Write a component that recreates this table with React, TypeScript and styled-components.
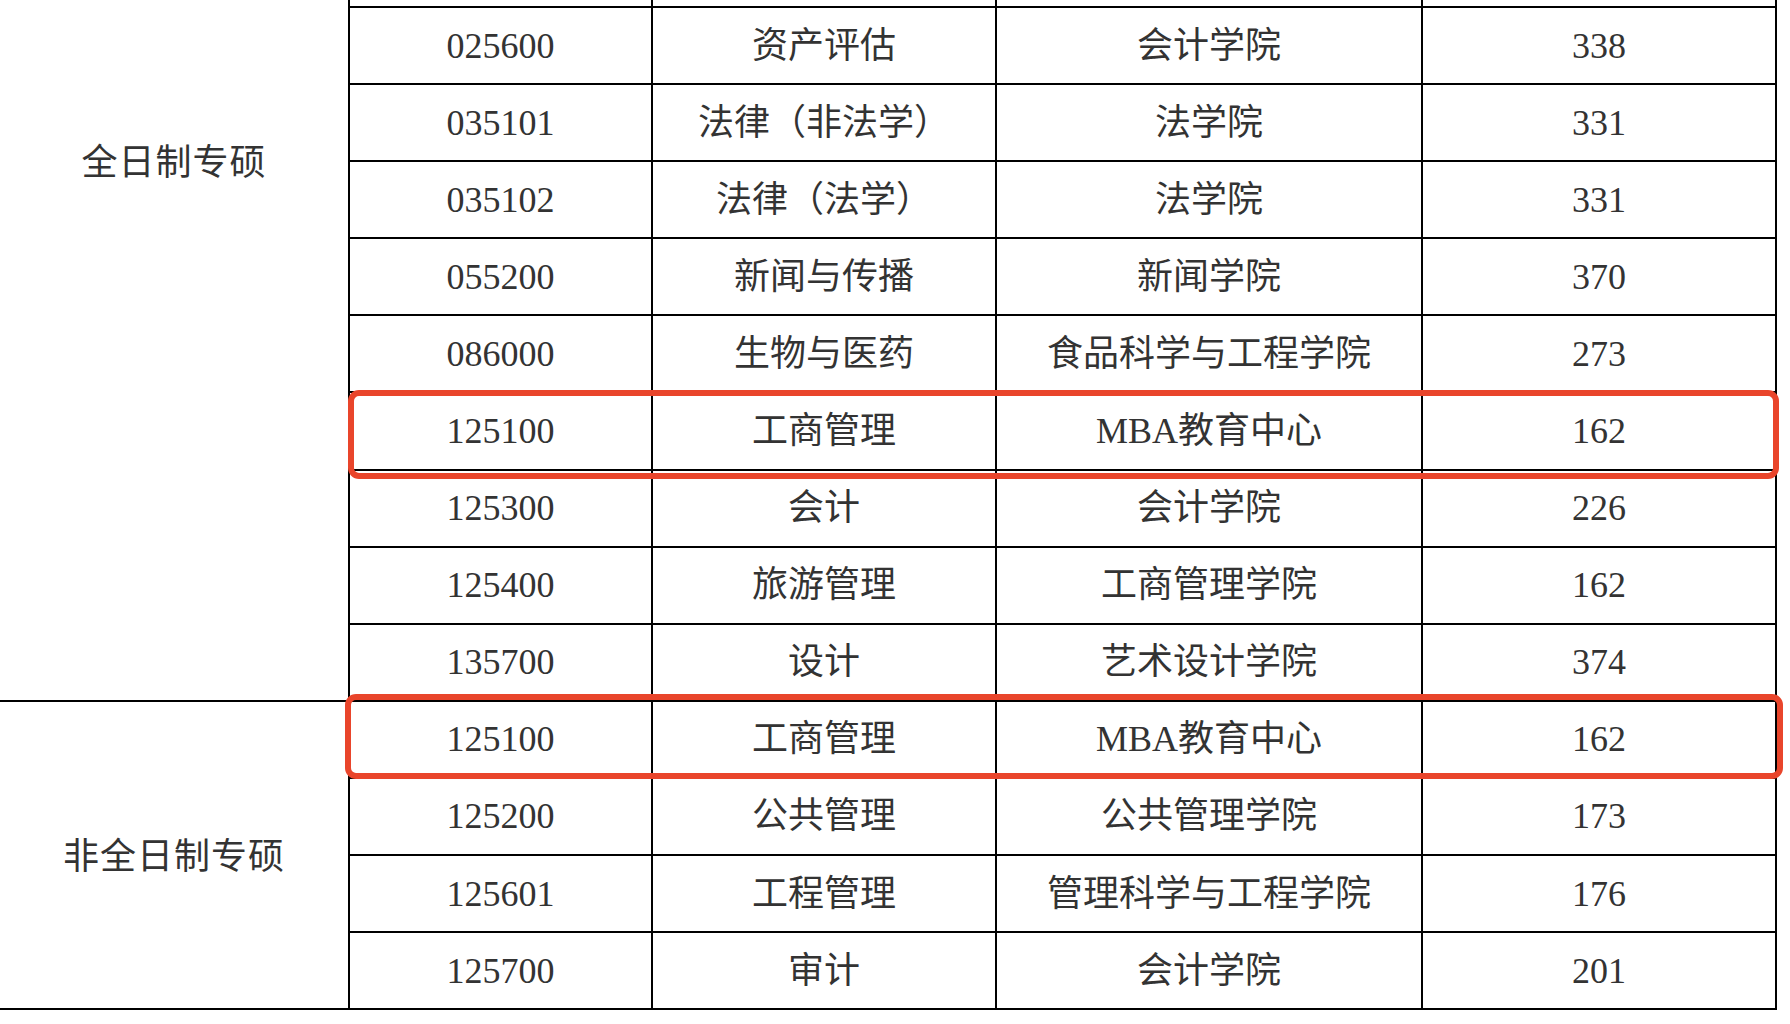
import React from "react"
import styled, { createGlobalStyle } from "styled-components"

const GlobalStyle = createGlobalStyle`
  html, body {
    margin: 0;
    padding: 0;
    background: #ffffff;
  }
  body {
    font-family: "Liberation Serif", "Noto Sans CJK SC", serif;
  }
`

type Row = {
  code: string
  major: string
  school: string
  score: string
}

const fullTime: Row[] = [
  { code: "025600", major: "资产评估", school: "会计学院", score: "338" },
  { code: "035101", major: "法律（非法学）", school: "法学院", score: "331" },
  { code: "035102", major: "法律（法学）", school: "法学院", score: "331" },
  { code: "055200", major: "新闻与传播", school: "新闻学院", score: "370" },
  { code: "086000", major: "生物与医药", school: "食品科学与工程学院", score: "273" },
  { code: "125100", major: "工商管理", school: "MBA教育中心", score: "162" },
  { code: "125300", major: "会计", school: "会计学院", score: "226" },
  { code: "125400", major: "旅游管理", school: "工商管理学院", score: "162" },
  { code: "135700", major: "设计", school: "艺术设计学院", score: "374" },
]

const partTime: Row[] = [
  { code: "125100", major: "工商管理", school: "MBA教育中心", score: "162" },
  { code: "125200", major: "公共管理", school: "公共管理学院", score: "173" },
  { code: "125601", major: "工程管理", school: "管理科学与工程学院", score: "176" },
  { code: "125700", major: "审计", school: "会计学院", score: "201" },
]

const Page = styled.div`
  position: relative;
  width: 1790px;
  height: 1024px;
  overflow: hidden;
  background: #ffffff;
`

const Table = styled.table`
  width: 1776px;
  table-layout: fixed;
  border-collapse: collapse;
  color: #333333;
  font-size: 36px;
`

const Tr = styled.tr<{ $h: number }>`
  height: ${({ $h }) => $h}px;
`

const Td = styled.td`
  border: 2px solid #000000;
  text-align: center;
  vertical-align: middle;
  padding: 0;
  line-height: 42px;
  white-space: nowrap;
`

const EdgeTd = styled(Td)`
  border-top: none;
`

const GroupCell = styled.td<{ $top?: number }>`
  border: 2px solid #000000;
  border-left: none;
  text-align: center;
  padding: 4px 0 0;
  line-height: 42px;
  letter-spacing: 1px;
  vertical-align: ${({ $top }) => ($top !== undefined ? "top" : "middle")};
  padding-top: ${({ $top }) => ($top !== undefined ? `${$top}px` : "4px")};
  border-top: ${({ $top }) => ($top !== undefined ? "none" : "2px solid #000000")};
`

const Highlight = styled.div<{ $x: number; $y: number; $w: number; $h: number }>`
  position: absolute;
  left: ${({ $x }) => $x}px;
  top: ${({ $y }) => $y}px;
  width: ${({ $w }) => $w}px;
  height: ${({ $h }) => $h}px;
  box-sizing: border-box;
  border: 6px solid #e9452b;
  border-radius: 11px;
  pointer-events: none;
`

const DataCells = ({ row }: { row: Row }) => (
  <>
    <Td>{row.code}</Td>
    <Td>{row.major}</Td>
    <Td>{row.school}</Td>
    <Td>{row.score}</Td>
  </>
)

const ROW_H = 77.1

const App = () => {
  return (
    <Page>
      <GlobalStyle />
      <Table>
        <colgroup>
          <col style={{ width: 349 }} />
          <col style={{ width: 303 }} />
          <col style={{ width: 344 }} />
          <col style={{ width: 426 }} />
          <col style={{ width: 354 }} />
        </colgroup>
        <tbody>
          <Tr $h={7}>
            <GroupCell rowSpan={fullTime.length + 1} $top={142}>
              全日制专硕
            </GroupCell>
            <EdgeTd />
            <EdgeTd />
            <EdgeTd />
            <EdgeTd />
          </Tr>
          {fullTime.map((row) => (
            <Tr $h={ROW_H} key={"f" + row.code}>
              <DataCells row={row} />
            </Tr>
          ))}
          {partTime.map((row, i) => (
            <Tr $h={ROW_H} key={"p" + row.code}>
              {i === 0 && <GroupCell rowSpan={partTime.length}>非全日制专硕</GroupCell>}
              <DataCells row={row} />
            </Tr>
          ))}
        </tbody>
      </Table>
      <Highlight $x={348} $y={390} $w={1431} $h={89} />
      <Highlight $x={345} $y={694} $w={1438} $h={85} />
    </Page>
  )
}

export default App
